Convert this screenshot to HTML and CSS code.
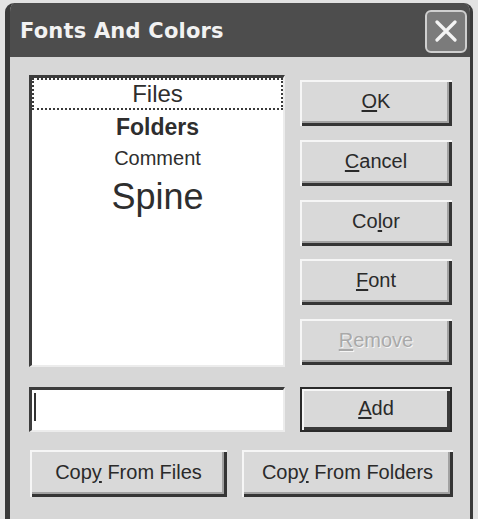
FILE: index.html
```html
<!DOCTYPE html>
<html>
<head>
<meta charset="utf-8">
<link rel="stylesheet" href="styles.css">
</head>
<body>
<div class="window">
  <div class="titlebar">
    <span class="title">Fonts And Colors</span>
    <span class="close">
      <svg width="22" height="22" viewBox="0 0 22 22"><path d="M2 2 L20 20 M20 2 L2 20" stroke="#f4f4f4" stroke-width="3.2" stroke-linecap="round" fill="none"/></svg>
    </span>
  </div>
  <div class="content">
    <div class="main">
      <div class="list">
        <div class="item item-files"><span>Files</span></div>
        <div class="item item-folders">Folders</div>
        <div class="item item-comment">Comment</div>
        <div class="item item-spine">Spine</div>
      </div>
      <div class="buttons">
        <button class="btn"><u>O</u>K</button>
        <button class="btn"><u>C</u>ancel</button>
        <button class="btn">Co<u>l</u>or</button>
        <button class="btn"><u>F</u>ont</button>
        <button class="btn btn-disabled"><u>R</u>emove</button>
      </div>
      <div class="field"><span class="caret"></span></div>
      <button class="btn btn-default"><u>A</u>dd</button>
    </div>
    <div class="copyrow">
      <button class="btn">Cop<u>y</u> From Files</button>
      <button class="btn">Cop<u>y</u> From Folders</button>
    </div>
  </div>
</div>
</body>
</html>
```

FILE: styles.css
```css
html, body {
  margin: 0;
  padding: 0;
  background: #e2e2e2;
}
body {
  width: 478px;
  height: 519px;
  overflow: hidden;
  font-family: "Liberation Sans", Arial, sans-serif;
}
.window {
  margin: 3px 0 0 5px;
  width: 468px;
  height: 540px;
  background: #d7d7d7;
  border-left: 5px solid #3a3a3a;
  border-right: 3px solid #3a3a3a;
  border-radius: 9px 9px 0 0;
  box-sizing: border-box;
  overflow: hidden;
}
.titlebar {
  height: 54px;
  background: #4d4d4d;
  display: flex;
  align-items: center;
  justify-content: space-between;
  padding: 0 3px 0 10px;
}
.title {
  font-family: "DejaVu Sans", Verdana, sans-serif;
  font-weight: bold;
  font-size: 21px;
  color: #f2f2f2;
  letter-spacing: 0.2px;
  margin-top: 1px;
}
.close {
  width: 38px;
  height: 39px;
  border: 2px solid #cfcfcf;
  border-radius: 6px;
  background: #7b7b7b;
  display: flex;
  align-items: center;
  justify-content: center;
  margin-top: 2px;
}
.content {
  padding: 18px 15px 0 19px;
}
.main {
  display: grid;
  grid-template-columns: 256px 152px;
  grid-template-rows: 292px 45px;
  column-gap: 15px;
  row-gap: 20px;
}
.list {
  background: #ffffff;
  border-top: 3px solid #3c3c3c;
  border-left: 3px solid #3c3c3c;
  border-right: 2px solid #ececec;
  border-bottom: 2px solid #ececec;
  color: #2e2e2e;
  text-align: center;
}
.item {
  display: flex;
  align-items: center;
  justify-content: center;
}
.item-files {
  height: 32px;
  font-size: 24px;
  border: 2px dotted #3a3a3a;
  box-sizing: border-box;
}
.item-folders {
  height: 34px;
  font-size: 23px;
  font-weight: bold;
}
.item-comment {
  height: 28px;
  font-size: 20px;
}
.item-spine {
  height: 50px;
  font-size: 36px;
}
.buttons {
  display: flex;
  flex-direction: column;
  justify-content: space-between;
  padding: 5px 0 2px;
}
.btn {
  font-family: "Liberation Sans", Arial, sans-serif;
  font-size: 20px;
  color: #2a2a2a;
  background: #d9d9d9;
  border: none;
  height: 46px;
  padding: 0 0 3px;
  box-shadow: inset 2px 2px 0 #f6f6f6, inset -3px -3px 0 #353535, inset -5px -5px 0 #a2a2a2;
}
.btn u {
  text-decoration-thickness: 2px;
  text-underline-offset: 2px;
}
.btn-disabled {
  color: #a9a9a9;
  text-shadow: 1px 1px 0 #f6f6f6;
}
.btn-default {
  height: 45px;
  border: 2px solid #2a2a2a;
  box-shadow: inset 2px 2px 0 #f6f6f6, inset -3px -3px 0 #3a3a3a;
}
.field {
  background: #ffffff;
  border-top: 3px solid #3c3c3c;
  border-left: 3px solid #3c3c3c;
  border-right: 2px solid #ececec;
  border-bottom: 2px solid #ececec;
  padding: 3px 0 0 2px;
}
.caret {
  display: block;
  width: 2px;
  height: 28px;
  background: #333333;
}
.copyrow {
  display: grid;
  grid-template-columns: 197px 211px;
  column-gap: 15px;
  margin: 18px 0 0 1px;
}
.copyrow .btn {
  height: 47px;
}
```
